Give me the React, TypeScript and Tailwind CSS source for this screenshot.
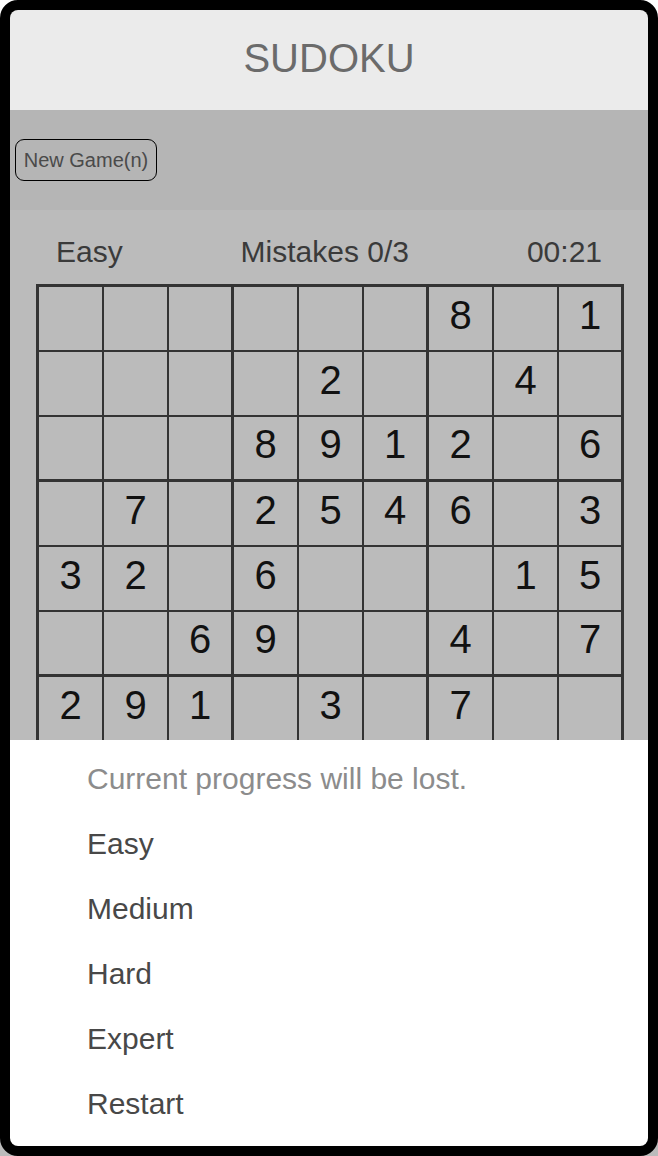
// rows 8 and 9 sit under the sheet, so they're left blank here
const board: number[][] = [
  [0, 0, 0, 0, 0, 0, 8, 0, 1],
  [0, 0, 0, 0, 2, 0, 0, 4, 0],
  [0, 0, 0, 8, 9, 1, 2, 0, 6],
  [0, 7, 0, 2, 5, 4, 6, 0, 3],
  [3, 2, 0, 6, 0, 0, 0, 1, 5],
  [0, 0, 6, 9, 0, 0, 4, 0, 7],
  [2, 9, 1, 0, 3, 0, 7, 0, 0],
  [0, 0, 0, 0, 0, 0, 0, 0, 0],
  [0, 0, 0, 0, 0, 0, 0, 0, 0],
];

const menu = ["Easy", "Medium", "Hard", "Expert", "Restart"];

function Cell({ value, row, col }: { value: number; row: number; col: number }) {
  const thickRight = col % 3 === 2;
  const thickBottom = row % 3 === 2;
  return (
    <div
      className={
        "h-[65px] w-[65px] flex items-center justify-center pb-[8px] border-[#333333] text-[40px] leading-none text-[#111111] " +
        (thickRight ? "border-r-[3px] " : "border-r-2 ") +
        (thickBottom ? "border-b-[3px]" : "border-b-2")
      }
    >
      {value ? value : ""}
    </div>
  );
}

export default function App() {
  return (
    <div className="w-[658px] h-[1156px] bg-linear-to-b from-white to-[#bbbbbb] font-['Liberation_Sans',Arial,sans-serif]">
      <div className="h-full flex flex-col rounded-[18px] border-[10px] border-black bg-black overflow-hidden">
        {/* Title */}
        <header className="h-[100px] shrink-0 flex items-center justify-center pb-1 bg-[#ebebeb] rounded-t-[4px]">
          <h1 className="text-[40px] leading-none text-[#6b6b6b]">SUDOKU</h1>
        </header>

        {/* Toolbar */}
        <div className="h-[100px] shrink-0 flex items-center pl-[5px] bg-[#b5b5b5]">
          <button className="h-[42px] w-[142px] rounded-[9px] border-[1.5px] border-black text-[20px] leading-none text-[#4a4a4a]">
            New Game(n)
          </button>
        </div>

        {/* Game */}
        <div className="h-[530px] shrink-0 overflow-hidden bg-[#bbbbbb]">
          <div className="flex justify-between items-start px-[46px] pt-[27px] pb-[17px] text-[30px] leading-[30px] text-[#3a3a3a]">
            <span>Easy</span>
            <span>Mistakes 0/3</span>
            <span>00:21</span>
          </div>
          <div className="ml-[26px] w-[588px] grid grid-cols-[repeat(9,65px)] border-l-[3px] border-t-[3px] border-[#333333]">
            {board.map((r, i) =>
              r.map((v, j) => <Cell key={i + "-" + j} value={v} row={i} col={j} />)
            )}
          </div>
        </div>

        {/* New game sheet */}
        <div className="flex-1 bg-white pt-[6px] rounded-b-[4px]">
          <div className="h-[65px] flex items-center pl-[77px] text-[30px] leading-none text-[#8c8c8c]">
            Current progress will be lost.
          </div>
          {menu.map((m) => (
            <div key={m} className="h-[65px] flex items-center pl-[77px] text-[30px] leading-none text-[#484848]">
              {m}
            </div>
          ))}
        </div>
      </div>
    </div>
  );
}
